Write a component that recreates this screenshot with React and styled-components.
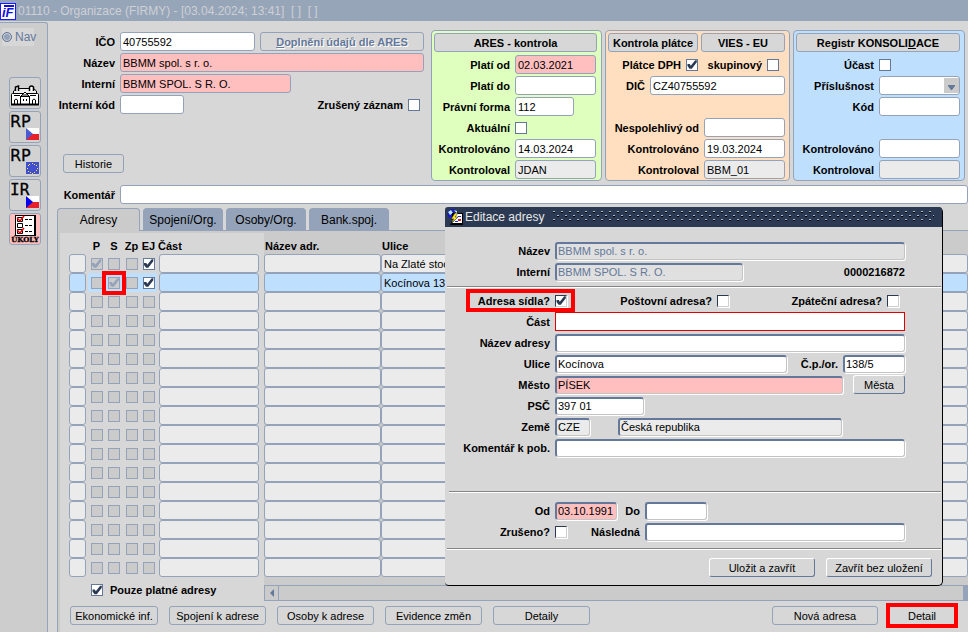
import React, { useId } from 'react';
import styled, { createGlobalStyle, css } from 'styled-components';

const line = '#94a3b9';
const gray = '#d7d7d7';
const darkGray = '#cbcbcb';
const pink = '#ffbfbf';
const blue = '#bfdfff';
const readonly = '#ebebeb';

const GlobalStyle = createGlobalStyle`
  * {
    box-sizing: border-box;
  }
  body {
    margin: 0;
    background: ${gray};
    overflow: hidden;
  }
  body, input, button, select {
    font-family: "Liberation Sans", Arial, sans-serif;
    font-size: 11px;
    color: #000;
  }
`;

const Page = styled.div`
  display: flex;
  flex-direction: column;
  min-height: 100vh;
`;

const TitleBar = styled.header`
  display: flex;
  align-items: center;
  gap: 2px;
  height: 21px;
  background: #97a5b9;
  color: #cdd0d5;
  font-size: 12px;
  white-space: pre;
`;

const Body = styled.div`
  display: flex;
  flex: 1;
`;

const Sidebar = styled.nav`
  width: 48px;
  flex: none;
  margin-top: 1px;
  background: #cdcdcd;
  border-right: 1px solid ${line};
  border-top: 1px solid ${line};
  border-top-right-radius: 3px;
`;

const NavLabel = styled.label`
  display: flex;
  align-items: center;
  gap: 3px;
  width: 32px;
  height: 18px;
  margin: 5px 0 31px 2px;
  background: ${gray};
  color: #64789a;
  font-size: 12px;
`;

const Radio = styled.input`
  appearance: none;
  flex: none;
  width: 10px;
  height: 10px;
  margin: 0;
  border: 1px solid #64789a;
  border-radius: 50%;
  background: ${line};
  box-shadow: inset 0 0 0 1px #cdcdcd;
`;

const Tools = styled.div`
  display: flex;
  flex-direction: column;
  gap: 2px;
  margin-left: 9px;
`;

const ToolButton = styled.button`
  width: 32px;
  height: 32px;
  padding: 0;
  border: 1px solid ${line};
  border-radius: 3px;
  background: ${p => p.$bg || '#d2d2d2'};

  svg {
    display: block;
  }
`;

const Main = styled.main`
  flex: 1;
  min-width: 0;
  display: flex;
  flex-direction: column;
`;

const Top = styled.div`
  display: grid;
  grid-template-columns: 1fr 171px 185px 172px;
  gap: 3px;
  padding: 9px 3px 0 0;
`;

const Stack = styled.div`
  display: flex;
  flex-direction: column;
  gap: 2px;
`;

const FormStack = styled(Stack)`
  padding: 2px 4px 0 0;
`;

const Panel = styled(Stack)`
  padding: 2px 4px 1px 2px;
  border: 1px solid ${line};
  border-radius: 4px;
  background: ${p => p.$bg};
`;

const PanelHead = styled.div`
  display: flex;
  align-items: flex-start;
  gap: 3px;
  height: 20px;
`;

const Row = styled.div`
  display: flex;
  align-items: center;
  justify-content: ${p => (p.$end ? 'flex-end' : 'flex-start')};
  gap: 5px;
  height: 19px;
  padding-right: ${p => p.$right || 0}px;
`;

const Label = styled.label`
  flex: none;
  width: ${p => (p.$w ? p.$w + 'px' : 'auto')};
  font-weight: bold;
  text-align: right;
  white-space: nowrap;
`;

const Input = styled.input`
  width: ${p => (p.$w ? p.$w + 'px' : 'auto')};
  flex: ${p => (p.$w ? 'none' : '1')};
  min-width: 0;
  height: 19px;
  margin: 0;
  padding: 0 2px;
  border: 1px solid ${line};
  border-radius: 3px;
  outline: none;
  background: ${p => p.$bg || '#fff'};
  color: ${p => p.$color || '#000'};
`;

const SunkenInput = styled(Input)`
  height: 18px;
  padding: 0 1px;
  border-width: 2px 1px 1px 2px;
  border-color: #64789a #c4c4c4 #c4c4c4 #64789a;
  box-shadow: 1px 1px 0 #fff;

  ${p => p.$focus && css`
    height: 19px;
    border: 1px solid #e00000;
    border-radius: 0;
    box-shadow: none;
  `}
`;

const Check = styled.input`
  appearance: none;
  flex: none;
  position: relative;
  width: 12px;
  height: 12px;
  margin: 0;
  border: 1px solid #64789a;
  background: #fff;

  &:disabled {
    border-color: ${line};
    background: ${darkGray};
  }
  &:checked::after {
    content: '';
    position: absolute;
    inset: 0;
    background: #2b3a52;
    clip-path: polygon(5% 45%, 28% 45%, 38% 62%, 82% 8%, 98% 8%, 98% 28%, 48% 92%, 25% 92%, 5% 65%);
  }
  &:checked:disabled::after {
    background: ${line};
  }

  ${p => p.$sunken && css`
    border-color: #2b3a52 #d0d0d0 #d0d0d0 #2b3a52;
    box-shadow: 1px 1px 0 #fff;
  `}
  ${p => p.$marked && css`
    outline: 4px solid #f00;
    outline-offset: 2px;
    z-index: 1;
  `}
`;

const Button = styled.button`
  width: ${p => (p.$w ? p.$w + 'px' : 'auto')};
  flex: ${p => (p.$w ? 'none' : '1')};
  height: 19px;
  padding: 0;
  border: 1px solid ${line};
  border-radius: 3px;
  background: ${gray};
  color: #000;
  font-weight: ${p => (p.$bold ? 'bold' : 'normal')};
  white-space: nowrap;

  &:disabled {
    color: #64789a;
    text-shadow: 1px 1px 0 #fff;
  }
  ${p => p.$raised && css`
    border-color: #fff #64789a #64789a #fff;
  `}
  ${p => p.$marked && css`
    border-radius: 0;
    outline: 4px solid #f00;
    outline-offset: -1px;
  `}
`;

const SelectBox = styled.div`
  position: relative;
  width: 81px;
  height: 19px;

  svg {
    position: absolute;
    top: 2px;
    right: 1px;
    background: ${darkGray};
    pointer-events: none;
  }
`;

const Select = styled.select`
  appearance: none;
  width: 100%;
  height: 19px;
  border: 1px solid ${line};
  border-radius: 3px;
  background: #fff;
`;

const History = styled.div`
  padding: 38px 0 0 15px;
`;

const Comment = styled(Row)`
  margin-top: 4px;
`;

const Tabs = styled.div`
  display: flex;
  align-items: flex-end;
  gap: 3px;
  margin: 4px 0 0 9px;
  padding-bottom: 1px;
  background: linear-gradient(${line}, ${line}) 0 100% / 100% 1px no-repeat;
`;

const Tab = styled.button`
  height: 22px;
  min-width: 80px;
  padding: 0 5px;
  border: 1px solid ${line};
  border-bottom: 0;
  border-radius: 4px 4px 0 0;
  background: ${line};
  font-size: 12px;

  ${p => p.$active && css`
    min-width: 83px;
    height: 23px;
    margin-bottom: -1px;
    background: ${darkGray};
  `}
`;

const TabPanel = styled.section`
  flex: 1;
  margin-left: 9px;
  border-left: 1px solid ${line};
  box-shadow: inset 2px 2px 0 ${darkGray};
`;

const Table = styled.table`
  width: 100%;
  table-layout: fixed;
  border-collapse: collapse;
`;

const Th = styled.th`
  height: 22px;
  padding: ${p => (p.$left ? '6px 0 0 1px' : '6px 0 0')};
  text-align: ${p => (p.$left ? 'left' : 'center')};
  line-height: 14px;
  white-space: nowrap;
  background: ${p => (p.$dark ? darkGray : 'transparent')};
`;

const Td = styled.td`
  height: 19px;
  padding: ${p => p.$pad || '0'};
  text-align: center;
  line-height: 0;
  background: ${p => p.$bg || 'transparent'};
`;

const CellInput = styled(Input)`
  display: block;
  width: 100%;
`;

const TableWrap = styled.div`
  padding: 1px 0 0 11px;
`;

const ListFooter = styled.div`
  display: flex;
  align-items: flex-end;
  height: 24px;
`;

const OnlyValid = styled.label`
  display: flex;
  align-items: center;
  gap: 7px;
  width: 206px;
  height: 22px;
  padding-left: 33px;
  font-weight: bold;
`;

const ScrollArea = styled.div`
  flex: 1;
  padding-top: 8px;
  background: ${darkGray};
`;

const ScrollBar = styled.div`
  display: flex;
  height: 16px;
  border: 1px solid ${line};
  border-right: 5px solid ${line};
`;

const ScrollButton = styled.button`
  width: 14px;
  padding: 0;
  border: 0;
  border-right: 1px solid ${line};
  border-radius: 4px 0 0 4px;
  background: ${darkGray};

  svg {
    display: block;
    margin-left: 4px;
  }
`;

const Actions = styled.div`
  display: flex;
  gap: 11px;
  padding: 5px 13px 0 12px;
`;

const Spacer = styled.span`
  flex: 1;
`;

const Gap = styled.span`
  flex: none;
  width: ${p => p.$w || 0}px;
`;

/* edit window floats over the list */
const Dialog = styled.section`
  position: absolute;
  left: 445px;
  top: 207px;
  width: 498px;
  background: ${gray};
  border-right: 1px solid #000;
  border-bottom: 1px solid #000;
  border-radius: 3px 5px 5px 4px;
`;

const DialogTitle = styled.header`
  display: flex;
  align-items: center;
  gap: 2px;
  height: 20px;
  margin-bottom: 14px;
  padding: 0 8px 0 2px;
  border-radius: 3px 3px 0 0;
  background: #2b3a52;
  color: #e8e8e8;
  font-size: 12px;
  white-space: nowrap;
`;

const Grip = styled.svg`
  flex: 1;
  min-width: 0;
  height: 12px;
  margin-left: 7px;
`;

const DialogRows = styled(Stack)`
  padding-right: 37px;
`;

const Divider = styled.hr`
  height: 2px;
  margin: ${p => p.$m};
  border: 0;
  border-top: 1px solid #858585;
  background: #fff;
`;

const Marked = styled.div`
  display: flex;
  align-items: center;
  gap: 5px;
  width: 101px;
  height: 15px;
  margin-left: 25px;
  padding-left: 4px;
  outline: 4px solid #f00;
`;

const DialogButtons = styled.div`
  display: flex;
  justify-content: flex-end;
  gap: 11px;
  padding: 0 10px 8px 0;
`;

const Field = ({ label, lw, as: As = Input, ...rest }) => {
  const id = useId();
  return (
    <>
      <Label htmlFor={id} $w={lw}>{label}</Label>
      <As id={id} {...rest} />
    </>
  );
};

const CheckField = ({ label, lw, ...rest }) => {
  const id = useId();
  return (
    <>
      <Label htmlFor={id} $w={lw}>{label}</Label>
      <Check id={id} type="checkbox" {...rest} />
    </>
  );
};

const Logo = () => (
  <svg width="16" height="18" viewBox="0 0 16 18">
    <rect x="0.5" y="1.5" width="15" height="16" fill="#fff" stroke="#1a1aff" />
    <text x="2" y="15" fontSize="13" fontWeight="bold" fontStyle="italic" fill="#1010e0">iF</text>
    <path d="M4 4h10" stroke="#1010e0" strokeWidth="2" />
  </svg>
);

const HouseIcon = () => (
  <svg width="30" height="30" viewBox="0 0 30 30" fill="none" stroke="#000">
    <path d="M3.5 16V13L6.500 10.500H23.500L26.500 13V16" fill="#eee" />
    <path d="M1.500 16.500Q1.500 15.500 2.500 15.500H27.500Q28.500 15.500 28.500 16.500V26.500H1.500Z" fill="#fff" />
    <path d="M5.500 13v-4l3-1v5M19.500 13v-4q2-2 4 0v4" fill="#fff" strokeWidth="1.500" />
    <path d="M4 17.500h6M20 17.500h6" />
    <path d="M10.500 26V18.500L15 14L19.500 18.500V26" fill="#fff" />
    <path d="M15 14l-3 3h6z" fill="#fff" />
    <path d="M10 18.500h10M13.500 23v-2M16.500 23v-2" />
    <path d="M4.500 26v-4q1.500-2 3 0v4M22.500 26v-4q1.500-2 3 0v4" />
    <path d="M1 26.500h28" strokeWidth="2" />
  </svg>
);

const CzFlag = ({ color }) => (
  <g>
    <path d="M16 16h13v6H16z" fill="#fff" />
    <path d="M16 22h13v6H16z" fill="#e8202a" />
    <path d="M16 16l7 6l-7 6z" fill={color} />
  </g>
);

const EuFlag = () => (
  <g>
    <path d="M16 16h13v12H16z" fill="#3f4fd0" />
    {[0, 1, 2, 3, 4, 5, 6, 7, 8, 9, 10, 11].map(i => (
      <rect
        key={i}
        x={22 + Math.round(5 * Math.sin(i * Math.PI / 6))}
        y={22 - Math.round(5 * Math.cos(i * Math.PI / 6))}
        width="1"
        height="1"
        fill="#ffef20"
      />
    ))}
  </g>
);

const TextIcon = ({ text, mono, children }) => (
  <svg width="30" height="30" viewBox="0 0 30 30">
    {children}
    <text
      x="0"
      y="15"
      fontSize="16"
      stroke="#000"
      strokeWidth="0.3"
      style={{ fontFamily: mono ? '"DejaVu Sans Mono", monospace' : '"DejaVu Sans", sans-serif' }}
    >
      {text}
    </text>
  </svg>
);

const TasksIcon = () => (
  <svg width="30" height="30" viewBox="0 0 30 30">
    <path d="M5 1h20v20H5z" fill="#fff" stroke="#000" shapeRendering="crispEdges" />
    <path d="M25 2v19" stroke="#000" strokeWidth="2" />
    <path d="M7.500 3.500h5v4h-5zM7.500 9.500h5v4h-5zM7.500 15.500h5v4h-5z" fill="#fff" stroke="#000" />
    <path d="M15 5.500h7M15 11.500h7M15 17.500h7" stroke="#000" strokeDasharray="3 1" />
    <path d="M7 4l3 3l4-5M7 16l3 3l4-5" fill="none" stroke="#e00" strokeWidth="1.500" />
    <text x="15" y="28" textAnchor="middle" fontSize="7" fontWeight="bold" stroke="#000" strokeWidth="0.3" style={{ fontFamily: '"DejaVu Serif", serif' }}>ÚKOLY</text>
  </svg>
);

const WindowIcon = () => (
  <svg width="16" height="16" viewBox="0 0 16 16">
    <circle cx="5.500" cy="5" r="5" fill="#1a1ac0" />
    <path d="M1 3l3-2l2 3l-3 2zM7 1l3 1v3z" fill="#b8e8e8" />
    <path d="M5 4h11v12H3l2-4z" fill="#000" />
    <path d="M7 5h8v9H5z" fill="#fff" />
    <path d="M11 7.500h3M8 12.500h3" stroke="#2030d0" />
    <path d="M11 10h3v2h-3z" fill="#e02020" />
    <path d="M8 4l-4 6h3l-3 5l7-7h-3l3-4z" fill="#ffe820" stroke="#000" strokeWidth="0.500" />
  </svg>
);

const DotGrip = () => (
  <Grip aria-hidden="true" shapeRendering="crispEdges">
    <defs>
      <pattern id="grip" width="8" height="8" patternUnits="userSpaceOnUse">
        <path d="M1 1h1v1H1zM5 5h1v1H5zM0 1h1v1H0zM4 5h1v1H4z" fill="#000" />
        <path d="M0 0h2v1H0zM4 4h2v1H4z" fill="#a9bbd2" />
      </pattern>
    </defs>
    <rect width="100%" height="12" fill="url(#grip)" />
  </Grip>
);

const rows = [
  { p: true, ej: true, street: 'Na Zlaté stoce' },
  { s: true, ej: true, street: 'Kocínova 138/5', current: true },
  ...Array(15).fill({})
];

const AddressRow = ({ row, n }) => {
  const bg = row.current ? blue : readonly;
  const rowBg = row.current ? blue : undefined;
  const name = `Řádek ${n}`;
  return (
    <tr>
      <Td $pad="0 2px 0 0"><CellInput $bg={bg} readOnly aria-label={name} /></Td>
      <Td $bg={rowBg}><Check type="checkbox" disabled defaultChecked={row.p} aria-label={`${name} P`} /></Td>
      <Td $bg={rowBg}><Check type="checkbox" disabled defaultChecked={row.s} $marked={row.current} aria-label={`${name} S`} /></Td>
      <Td $bg={rowBg}><Check type="checkbox" disabled aria-label={`${name} Zp`} /></Td>
      <Td $bg={rowBg}><Check type="checkbox" disabled={!row.ej} defaultChecked={row.ej} aria-label={`${name} EJ`} /></Td>
      <Td $pad="0 5px 0 2px"><CellInput $bg={bg} readOnly aria-label={`${name} Část`} /></Td>
      <Td $bg={darkGray}><CellInput $bg={bg} readOnly aria-label={`${name} Název adr.`} /></Td>
      <Td $bg={darkGray}><CellInput $bg={bg} readOnly defaultValue={row.street} aria-label={`${name} Ulice`} /></Td>
    </tr>
  );
};

const AddressList = () => (
  <Table>
    <colgroup>
      <col style={{ width: 19 }} />
      <col style={{ width: 17 }} />
      <col style={{ width: 18 }} />
      <col style={{ width: 17 }} />
      <col style={{ width: 17 }} />
      <col style={{ width: 107 }} />
      <col style={{ width: 117 }} />
      <col />
    </colgroup>
    <thead>
      <tr>
        <Th />
        <Th>P</Th>
        <Th>S</Th>
        <Th>Zp</Th>
        <Th>EJ</Th>
        <Th $left>Část</Th>
        <Th $left $dark>Název adr.</Th>
        <Th $left $dark>Ulice</Th>
      </tr>
    </thead>
    <tbody>
      {rows.map((row, i) => <AddressRow key={i} row={row} n={i + 1} />)}
    </tbody>
  </Table>
);

const EditDialog = () => (
  <Dialog role="dialog" aria-label="Editace adresy">
    <DialogTitle>
      <WindowIcon />
      Editace adresy
      <DotGrip />
    </DialogTitle>
    <DialogRows>
      <Row><Field as={SunkenInput} label="Název" lw={105} $bg="#e0e0e0" $color="#64789a" disabled defaultValue="BBMM spol. s r. o." /></Row>
      <Row>
        <Field as={SunkenInput} label="Interní" lw={105} $w={188} $bg="#e0e0e0" $color="#64789a" disabled defaultValue="BBMM SPOL. S R. O." />
        <Spacer />
        <Label as="span">0000216872</Label>
      </Row>
    </DialogRows>
    <Divider $m="5px 1px 3px 2px" />
    <DialogRows>
      <Row>
        <Marked><CheckField label="Adresa sídla?" lw={76} $sunken defaultChecked /></Marked>
        <CheckField label="Poštovní adresa?" lw={136} $sunken />
        <CheckField label="Zpáteční adresa?" lw={148} $sunken />
      </Row>
      <Row><Field as={SunkenInput} label="Část" lw={105} $focus /></Row>
      <Row><Field as={SunkenInput} label="Název adresy" lw={105} /></Row>
      <Row>
        <Field as={SunkenInput} label="Ulice" lw={105} defaultValue="Kocínova" />
        <Field as={SunkenInput} label="Č.p./or." lw={46} $w={62} defaultValue="138/5" />
      </Row>
      <Row>
        <Field as={SunkenInput} label="Město" lw={105} $bg={pink} defaultValue="PÍSEK" />
        <Gap />
        <Button $w={52} $raised>Města</Button>
      </Row>
      <Row><Field as={SunkenInput} label="PSČ" lw={105} $w={89} defaultValue="397 01" /></Row>
      <Row $right={63}>
        <Field as={SunkenInput} label="Země" lw={105} $w={35} $bg={readonly} readOnly defaultValue="CZE" />
        <Gap $w={18} />
        <SunkenInput $bg={readonly} readOnly defaultValue="Česká republika" aria-label="Název země" />
      </Row>
      <Row><Field as={SunkenInput} label="Komentář k pob." lw={105} /></Row>
    </DialogRows>
    <Divider $m="34px 1px 8px 4px" />
    <DialogRows>
      <Row>
        <Field as={SunkenInput} label="Od" lw={105} $w={62} $bg={pink} defaultValue="03.10.1991" />
        <Field as={SunkenInput} label="Do" lw={18} $w={62} />
      </Row>
      <Row>
        <CheckField label="Zrušeno?" lw={105} $sunken />
        <Field as={SunkenInput} label="Následná" lw={68} />
      </Row>
    </DialogRows>
    <Divider $m="7px 1px 8px 2px" />
    <DialogButtons>
      <Button $w={106} $raised>Uložit a zavřít</Button>
      <Button $w={106} $raised>Zavřít bez uložení</Button>
    </DialogButtons>
  </Dialog>
);

const App = () => (
  <Page>
    <GlobalStyle />
    <TitleBar>
      <Logo />
      <span>01110 - Organizace (FIRMY) - [03.04.2024; 13:41]  [ ]  [ ]</span>
    </TitleBar>
    <Body>
      <Sidebar>
        <NavLabel><Radio type="radio" name="nav" disabled />Nav</NavLabel>
        <Tools>
          <ToolButton aria-label="Organizace"><HouseIcon /></ToolButton>
          <ToolButton><TextIcon text="RP"><CzFlag color="#4a5ad0" /></TextIcon></ToolButton>
          <ToolButton><TextIcon text="RP"><EuFlag /></TextIcon></ToolButton>
          <ToolButton><TextIcon text="IR" mono><CzFlag color="#0000f0" /></TextIcon></ToolButton>
          <ToolButton $bg={pink}><TasksIcon /></ToolButton>
        </Tools>
      </Sidebar>
      <Main>
        <Top>
          <FormStack>
            <Row>
              <Field label="IČO" lw={67} $w={135} defaultValue="40755592" />
              <Button $bold disabled><u>D</u>oplnění údajů dle ARES</Button>
            </Row>
            <Row><Field label="Název" lw={67} $bg={pink} defaultValue="BBMM spol. s r. o." /></Row>
            <Row><Field label="Interní" lw={67} $w={171} $bg={pink} defaultValue="BBMM SPOL. S R. O." /></Row>
            <Row $right={4}>
              <Field label="Interní kód" lw={67} $w={64} />
              <Spacer />
              <CheckField label="Zrušený záznam" />
            </Row>
            <History><Button $w={61}>Historie</Button></History>
          </FormStack>
          <Panel $bg="#dfffbf">
            <PanelHead><Button $bold>ARES - kontrola</Button></PanelHead>
            <Row $end $right={1}><Field label="Platí od" $w={81} $bg={pink} defaultValue="02.03.2021" /></Row>
            <Row $end $right={1}><Field label="Platí do" $w={81} /></Row>
            <Row $end $right={23}><Field label="Právní forma" $w={59} defaultValue="112" /></Row>
            <Row $end $right={70}><CheckField label="Aktuální" /></Row>
            <Row $end $right={1}><Field label="Kontrolováno" $w={81} defaultValue="14.03.2024" /></Row>
            <Row $end $right={1}><Field label="Kontroloval" $w={81} $bg={readonly} readOnly defaultValue="JDAN" /></Row>
          </Panel>
          <Panel $bg="#ffdfbf">
            <PanelHead>
              <Button $w={90} $bold>Kontrola plátce</Button>
              <Button $bold>VIES - EU</Button>
            </PanelHead>
            <Row $end $right={6}>
              <CheckField label="Plátce DPH" defaultChecked />
              <CheckField label="skupinový" lw={59} />
            </Row>
            <Row $end><Field label="DIČ" $w={135} defaultValue="CZ40755592" /></Row>
            <Row />
            <Row $end><Field label="Nespolehlivý od" $w={81} /></Row>
            <Row $end><Field label="Kontrolováno" $w={81} defaultValue="19.03.2024" /></Row>
            <Row $end><Field label="Kontroloval" $w={81} $bg={readonly} readOnly defaultValue="BBM_01" /></Row>
          </Panel>
          <Panel $bg={blue}>
            <PanelHead><Button $bold>Registr KONSOLI<u>D</u>ACE</Button></PanelHead>
            <Row $end $right={69}><CheckField label="Účast" /></Row>
            <Row $end>
              <Label htmlFor="prislusnost">Příslušnost</Label>
              <SelectBox>
                <Select id="prislusnost" />
                <svg width="15" height="15" viewBox="0 0 15 15"><path d="M4 7h7v1l-3 4h-1l-3-4z" fill="#64789a" /></svg>
              </SelectBox>
            </Row>
            <Row $end><Field label="Kód" $w={81} /></Row>
            <Row />
            <Row $end><Field label="Kontrolováno" $w={81} /></Row>
            <Row $end><Field label="Kontroloval" $w={81} $bg={readonly} readOnly /></Row>
          </Panel>
        </Top>
        <Comment><Field label="Komentář" lw={67} /></Comment>
        <Tabs>
          <Tab $active>Adresy</Tab>
          <Tab>Spojení/Org.</Tab>
          <Tab>Osoby/Org.</Tab>
          <Tab>Bank.spoj.</Tab>
        </Tabs>
        <TabPanel>
          <TableWrap>
            <AddressList />
          </TableWrap>
          <ListFooter>
            <OnlyValid><Check type="checkbox" defaultChecked />Pouze platné adresy</OnlyValid>
            <ScrollArea>
              <ScrollBar>
                <ScrollButton aria-label="Posunout vlevo">
                  <svg width="6" height="8" viewBox="0 0 6 8"><path d="M5 0v8L1 4z" fill="#64789a" /></svg>
                </ScrollButton>
              </ScrollBar>
            </ScrollArea>
          </ListFooter>
          <Actions>
            <Button $w={88}>Ekonomické inf.</Button>
            <Button $w={97}>Spojení k adrese</Button>
            <Button $w={97}>Osoby k adrese</Button>
            <Button $w={97}>Evidence změn</Button>
            <Button $w={97}>Detaily</Button>
            <Spacer />
            <Button $w={106}>Nová adresa</Button>
            <Button $w={66} $marked>Detail</Button>
          </Actions>
        </TabPanel>
      </Main>
    </Body>
    <EditDialog />
  </Page>
);

export default App;
